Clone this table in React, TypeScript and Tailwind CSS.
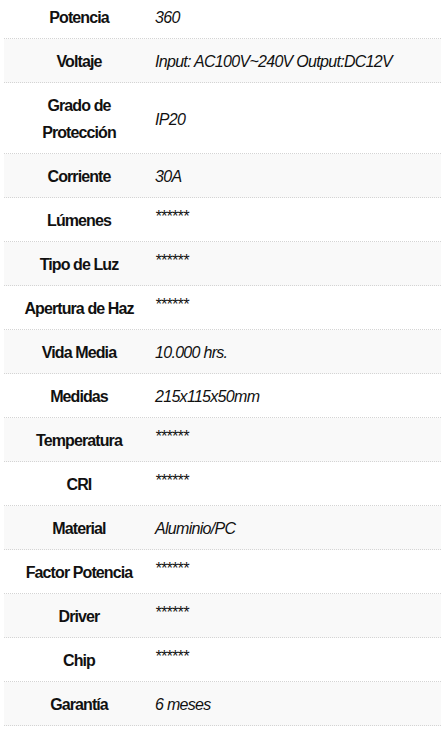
import React from "react";

const rows: [string, string][] = [
  ["Potencia", "360"],
  ["Voltaje", "Input: AC100V~240V Output:DC12V"],
  ["Grado de Protección", "IP20"],
  ["Corriente", "30A"],
  ["Lúmenes", "******"],
  ["Tipo de Luz", "******"],
  ["Apertura de Haz", "******"],
  ["Vida Media", "10.000 hrs."],
  ["Medidas", "215x115x50mm"],
  ["Temperatura", "******"],
  ["CRI", "******"],
  ["Material", "Aluminio/PC"],
  ["Factor Potencia", "******"],
  ["Driver", "******"],
  ["Chip", "******"],
  ["Garantía", "6 meses"],
];

export default function App() {
  return (
    <div
      className="w-[443px] h-[732px] overflow-hidden bg-white"
      style={{ fontFamily: '"Liberation Sans", Arial, sans-serif' }}
    >
      <div className="ml-[4px] mr-[2px] -mt-[5px] flex flex-col">
        {rows.map(([label, value], i) => (
          <div
            key={label}
            className={`flex items-center border-b border-dotted border-[#d4d4d4] pt-[9px] pb-[7px] ${
              i % 2 === 1 ? "bg-[#f9f9f9]" : "bg-white"
            }`}
          >
            <div className="w-[150px] shrink-0 px-[10px] text-center text-[16px] leading-[27px] font-bold tracking-[-0.9px] text-[#111]">
              {label}
            </div>
            <div
              className={`pl-[1px] text-[16px] leading-[27px] italic tracking-[-0.7px] text-[#111] ${
                value === "******" ? "self-start -mt-[4px]" : ""
              }`}
            >
              {value}
            </div>
          </div>
        ))}
      </div>
    </div>
  );
}
